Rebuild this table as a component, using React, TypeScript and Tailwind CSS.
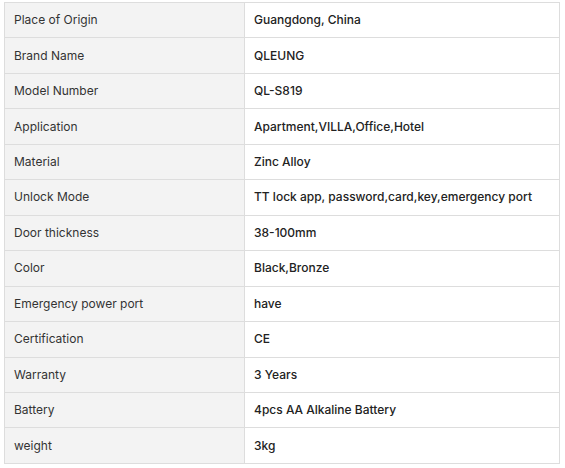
const ROWS: [string, string][] = [
  ['Place of Origin', 'Guangdong, China'],
  ['Brand Name', 'QLEUNG'],
  ['Model Number', 'QL-S819'],
  ['Application', 'Apartment,VILLA,Office,Hotel'],
  ['Material', 'Zinc Alloy'],
  ['Unlock Mode', 'TT lock app, password,card,key,emergency port'],
  ['Door thickness', '38-100mm'],
  ['Color', 'Black,Bronze'],
  ['Emergency power port', 'have'],
  ['Certification', 'CE'],
  ['Warranty', '3 Years'],
  ['Battery', '4pcs AA Alkaline Battery'],
  ['weight', '3kg'],
];

export default function App() {
  return (
    <div className="w-[565px] h-[468px] bg-white pl-[4px] pt-[2px] font-['Inter',sans-serif] text-[12px]">
      <table className="w-[556px] border-collapse table-fixed">
        <colgroup>
          <col className="w-[240px]" />
          <col />
        </colgroup>
        <tbody>
          {ROWS.map(([label, value]) => (
            <tr key={label} className="h-[35.46px]">
              <td className="border border-[#dddddd] bg-[#f3f3f3] pl-[9px] text-[#333333] align-middle p-0">
                {label}
              </td>
              <td className="border border-[#dddddd] bg-white pl-[9px] font-medium text-[#222222] align-middle p-0">
                {value}
              </td>
            </tr>
          ))}
        </tbody>
      </table>
    </div>
  );
}
